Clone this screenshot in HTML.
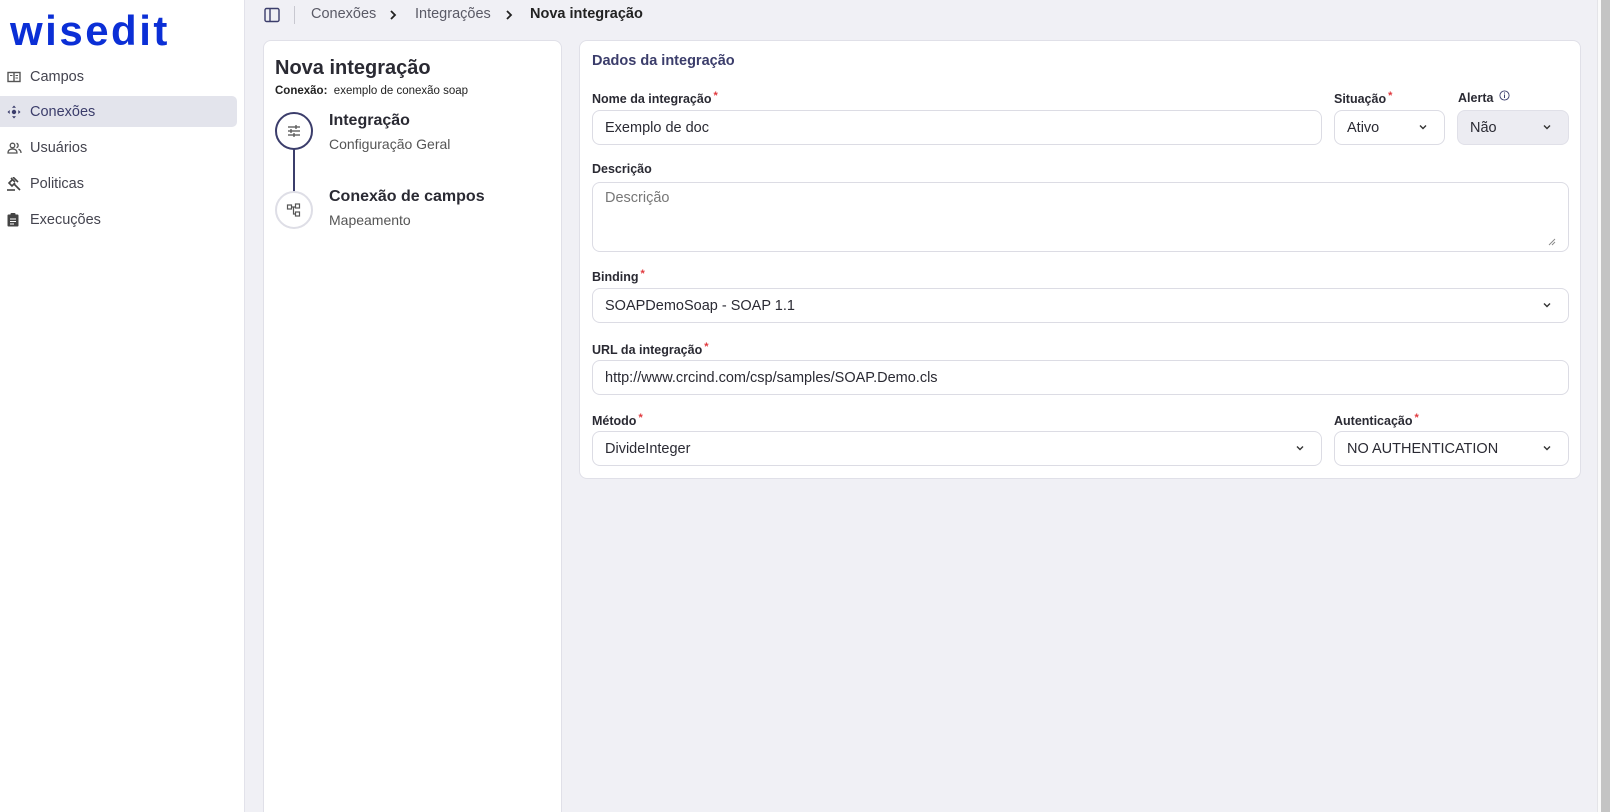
<!DOCTYPE html>
<html><head><meta charset="utf-8">
<style>
*{box-sizing:border-box;margin:0;padding:0}
html,body{width:1610px;height:812px;overflow:hidden}
body{font-family:"Liberation Sans",sans-serif;background:#f0f0f5;position:relative;color:#2a2a33}
.side{position:absolute;left:0;top:0;width:245px;height:812px;background:#fff;border-right:1px solid #e2e2ea}
.logo{position:absolute;left:10px;top:10px;font-size:42px;line-height:1;font-weight:bold;color:#0b2fd6;letter-spacing:2.5px;font-family:"Liberation Sans",sans-serif}
.nav{position:absolute;left:0;width:237px;height:31px;display:flex;align-items:center;font-size:14.5px;color:#44444f}
.nav svg{position:absolute;left:7px}
.nav span{position:absolute;left:30px}
.nav.act{background:#e3e4ec;border-radius:0 5px 5px 0;color:#3b3d6b}
.bc{position:absolute;top:6px;height:18px;font-size:14.5px;color:#5a5a66}
.card{position:absolute;background:#fff;border:1px solid #e0e0e8;border-radius:8px}
.lbl{position:absolute;font-size:12.5px;font-weight:bold;color:#2a2a33}
.lbl i{color:#e0393e;font-style:normal;font-size:11px;vertical-align:4px;margin-left:2px}
.inp{position:absolute;height:35px;border:1px solid #dcdce4;border-radius:8px;background:#fff;font-size:14.5px;color:#2a2a33;padding:0 12px;display:flex;align-items:center}
.chev{position:absolute;right:16px;top:12px}
</style></head><body>
<div class="side">
  <div class="logo">wisedit</div>
  <div class="nav" style="top:61px"><svg width="14" height="12" viewBox="0 0 14 12"><rect x="1" y="1.5" width="12" height="9" fill="none" stroke="#555" stroke-width="1.4"/><line x1="7" y1="1.5" x2="7" y2="10.5" stroke="#555" stroke-width="1.4"/><line x1="3" y1="4.5" x2="5.5" y2="4.5" stroke="#555"/><line x1="8.5" y1="4.5" x2="11" y2="4.5" stroke="#555"/><line x1="8.5" y1="7" x2="11" y2="7" stroke="#555"/></svg><span>Campos</span></div>
  <div class="nav act" style="top:96px"><svg width="14" height="14" viewBox="0 0 14 14"><circle cx="7" cy="7" r="2.2" fill="#3b3d6b"/><path d="M7 0.5l2 2.2H5zM7 13.5l2-2.2H5zM0.5 7l2.2-2v4zM13.5 7l-2.2-2v4z" fill="#3b3d6b"/></svg><span>Conexões</span></div>
  <div class="nav" style="top:132px"><svg width="15" height="12" viewBox="0 0 15 12"><circle cx="5.5" cy="3.5" r="2.3" fill="none" stroke="#555" stroke-width="1.3"/><path d="M1 11c0-3 2-4 4.5-4s4.5 1 4.5 4z" fill="none" stroke="#555" stroke-width="1.3"/><path d="M9.5 1.3a2.3 2.3 0 0 1 0 4.4M11.5 7.3c1.5.5 2.5 1.6 2.5 3.7" fill="none" stroke="#555" stroke-width="1.3"/></svg><span>Usuários</span></div>
  <div class="nav" style="top:168px"><svg width="15" height="14" viewBox="0 0 15 14"><path d="M4 1l4 4M6 0l5 5M5 3l-3 3 3 3 3-3M7 7l6 6" stroke="#444" stroke-width="1.6" fill="none"/><line x1="0" y1="13" x2="8" y2="13" stroke="#444" stroke-width="1.6"/></svg><span>Politicas</span></div>
  <div class="nav" style="top:204px"><svg width="12" height="14" viewBox="0 0 12 14"><rect x="0.5" y="1.5" width="11" height="12" rx="1" fill="#444"/><rect x="3.5" y="0" width="5" height="3" rx="1" fill="#444"/><line x1="3" y1="6" x2="9" y2="6" stroke="#fff"/><line x1="3" y1="8.5" x2="9" y2="8.5" stroke="#fff"/><line x1="3" y1="11" x2="7" y2="11" stroke="#fff"/></svg><span>Execuções</span></div>
</div>

<svg style="position:absolute;left:264px;top:7px" width="16" height="16" viewBox="0 0 16 16"><rect x="1" y="1.5" width="14" height="13" rx="1.5" fill="none" stroke="#3b3d6b" stroke-width="1.4"/><line x1="6" y1="1.5" x2="6" y2="14.5" stroke="#3b3d6b" stroke-width="1.4"/></svg>
<div style="position:absolute;left:294px;top:6px;width:1px;height:18px;background:#c8c8d0"></div>
<div class="bc" style="left:311px">Conexões</div>
<svg style="position:absolute;left:389px;top:10px" width="8" height="10" viewBox="0 0 8 10"><path d="M2 1l4 4-4 4" stroke="#222" stroke-width="1.8" fill="none"/></svg>
<div class="bc" style="left:415px">Integrações</div>
<svg style="position:absolute;left:505px;top:10px" width="8" height="10" viewBox="0 0 8 10"><path d="M2 1l4 4-4 4" stroke="#222" stroke-width="1.8" fill="none"/></svg>
<div class="bc" style="left:530px;font-weight:bold;color:#222">Nova integração</div>

<div class="card" style="left:263px;top:40px;width:299px;height:800px">
  <div style="position:absolute;left:11px;top:16px;font-size:20px;font-weight:bold;color:#2a2a33">Nova integração</div>
  <div style="position:absolute;left:11px;top:44px;font-size:11.5px;color:#222"><b>Conexão:</b>&nbsp; exemplo de conexão soap</div>
  <div style="position:absolute;left:29px;top:108px;width:2px;height:44px;background:#3b3d6b"></div>
  <div style="position:absolute;left:11px;top:71px;width:38px;height:38px;border-radius:50%;border:2px solid #3b3d6b;background:#fff"></div>
  <svg style="position:absolute;left:22px;top:82px" width="16" height="16" viewBox="0 0 16 16"><g stroke="#555" stroke-width="1.3"><line x1="2" y1="4" x2="14" y2="4"/><line x1="2" y1="8" x2="14" y2="8"/><line x1="2" y1="12" x2="14" y2="12"/><line x1="10" y1="2" x2="10" y2="6"/><line x1="5" y1="6" x2="5" y2="10"/><line x1="8" y1="10" x2="8" y2="14"/></g></svg>
  <div style="position:absolute;left:11px;top:150px;width:38px;height:38px;border-radius:50%;border:2px solid #dedee6;background:#fff"></div>
  <svg style="position:absolute;left:22px;top:161px" width="16" height="16" viewBox="0 0 16 16"><g fill="none" stroke="#555" stroke-width="1.2"><rect x="1.5" y="3" width="4" height="4"/><rect x="9.5" y="2" width="4" height="4"/><rect x="9.5" y="10" width="4" height="4"/><path d="M5.5 5h2v7h2M7.5 5h2"/></g></svg>
  <div style="position:absolute;left:65px;top:71px;font-size:16px;font-weight:bold">Integração</div>
  <div style="position:absolute;left:65px;top:95px;font-size:14px;color:#555">Configuração Geral</div>
  <div style="position:absolute;left:65px;top:147px;font-size:16px;font-weight:bold">Conexão de campos</div>
  <div style="position:absolute;left:65px;top:171px;font-size:14px;color:#555">Mapeamento</div>
</div>

<div class="card" style="left:579px;top:40px;width:1002px;height:439px"></div>
<div style="position:absolute;left:592px;top:53px;font-size:14.5px;font-weight:bold;color:#3b3d6b">Dados da integração</div>

<div class="lbl" style="left:592px;top:90px">Nome da integração<i>*</i></div>
<div class="inp" style="left:592px;top:110px;width:730px">Exemplo de doc</div>
<div class="lbl" style="left:1334px;top:90px">Situação<i>*</i></div>
<div class="inp" style="left:1334px;top:110px;width:111px">Ativo<svg class="chev" width="10" height="8" viewBox="0 0 10 8"><path d="M2 2.5l3 3 3-3" stroke="#333" stroke-width="1.4" fill="none"/></svg></div>
<div class="lbl" style="left:1458px;top:90px">Alerta <svg width="11" height="11" viewBox="0 0 11 11" style="vertical-align:1px;margin-left:2px"><circle cx="5.5" cy="5.5" r="4.6" fill="none" stroke="#3b3d6b" stroke-width="0.9"/><line x1="5.5" y1="4.5" x2="5.5" y2="8" stroke="#3b3d6b"/><circle cx="5.5" cy="3" r="0.6" fill="#3b3d6b"/></svg></div>
<div class="inp" style="left:1457px;top:110px;width:112px;background:#ececf2;border-color:#e0e0e8">Não<svg class="chev" width="10" height="8" viewBox="0 0 10 8"><path d="M2 2.5l3 3 3-3" stroke="#333" stroke-width="1.4" fill="none"/></svg></div>

<div class="lbl" style="left:592px;top:162px">Descrição</div>
<div class="inp" style="left:592px;top:182px;width:977px;height:70px;align-items:flex-start;padding-top:7px;color:#777">Descrição<svg style="position:absolute;right:12px;bottom:5px" width="8" height="8" viewBox="0 0 8 8"><path d="M7 1L1 7M7 4L4 7" stroke="#888" stroke-width="0.9"/></svg></div>

<div class="lbl" style="left:592px;top:268px">Binding<i>*</i></div>
<div class="inp" style="left:592px;top:288px;width:977px">SOAPDemoSoap - SOAP 1.1<svg class="chev" width="10" height="8" viewBox="0 0 10 8"><path d="M2 2.5l3 3 3-3" stroke="#333" stroke-width="1.4" fill="none"/></svg></div>

<div class="lbl" style="left:592px;top:341px">URL da integração<i>*</i></div>
<div class="inp" style="left:592px;top:360px;width:977px">http://www.crcind.com/csp/samples/SOAP.Demo.cls</div>

<div class="lbl" style="left:592px;top:412px">Método<i>*</i></div>
<div class="inp" style="left:592px;top:431px;width:730px">DivideInteger<svg class="chev" width="10" height="8" viewBox="0 0 10 8"><path d="M2 2.5l3 3 3-3" stroke="#333" stroke-width="1.4" fill="none"/></svg></div>
<div class="lbl" style="left:1334px;top:412px">Autenticação<i>*</i></div>
<div class="inp" style="left:1334px;top:431px;width:235px">NO AUTHENTICATION<svg class="chev" width="10" height="8" viewBox="0 0 10 8"><path d="M2 2.5l3 3 3-3" stroke="#333" stroke-width="1.4" fill="none"/></svg></div>

<div style="position:absolute;left:1597px;top:0;width:4px;height:812px;background:#fafafa;border-left:1px solid #e4e4e8"></div>
<div style="position:absolute;left:1601px;top:0;width:9px;height:812px;background:#c4c4c4"></div>
</body></html>
